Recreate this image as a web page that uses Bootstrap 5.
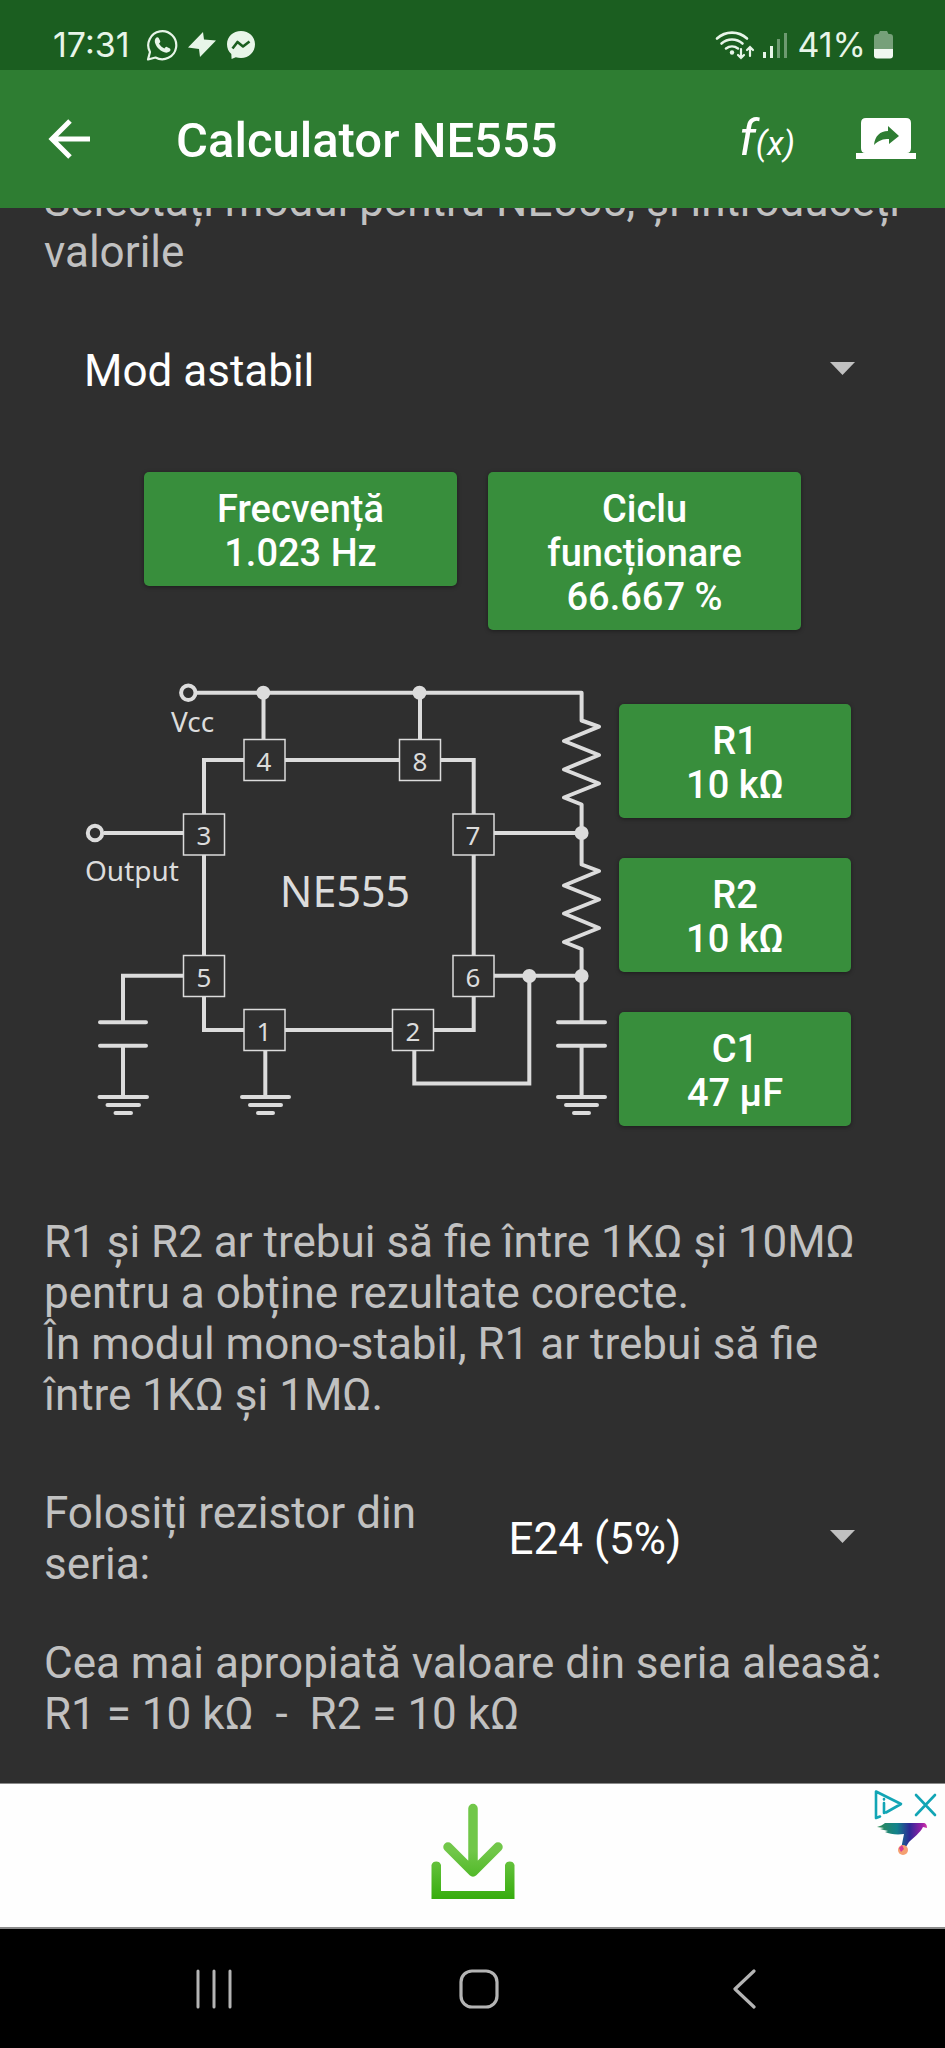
<!DOCTYPE html>
<html lang="ro">
<head>
<meta charset="utf-8">
<meta name="viewport" content="width=device-width, initial-scale=1">
<title>Calculator NE555</title>
<link href="https://cdn.jsdelivr.net/npm/bootstrap@5.3.0/dist/css/bootstrap.min.css" rel="stylesheet">
<style>
  body { background: #2f2f2f; color: #c1c1c1; font-family: Roboto, "Noto Sans", sans-serif; font-size: 44px; line-height: 51px; }
  svg { display: block; flex: none; }
  .status-strip { background: #1b5e20; color: #e8f5e9; height: 70px; padding: 20px 52px 0 53px; font-size: 34px; line-height: 50px; font-family: Inter, Roboto, sans-serif; font-weight: 400; }
  .app-header { background: #2e7d32; height: 138px; padding: 0 29px 0 48px; }
  .app-header h1 { font-size: 49px; line-height: 56px; font-weight: 500; margin-left: 84px; padding-top: 4px; }
  .icon-btn { background: none; border: 0; padding: 0; color: #fff; }
  .fx-f { font-size: 50px; line-height: 56px; font-style: italic; }
  .fx-x { font-size: 34px; font-style: italic; }
  .share-btn { margin-left: 61px; }
  .page-body { padding: 0 44px 43px; }
  .intro-text { margin-top: -32px; }
  .spinner-select { appearance: none; border: 0; background-color: transparent; color: #fff; width: 100%; height: 98px; padding: 0 80px 0 36px; font: inherit; }
  .select-box { display: grid; align-items: center; }
  .select-box > * { grid-area: 1 / 1; }
  .select-box > svg { justify-self: end; margin-right: 46px; pointer-events: none; }
  .mode-box { margin: 44px 0 52px; }
  .mode-box .spinner-select { padding-left: 40px; }
  .value-btn { background: #388e3c; color: #fff; font-size: 38px; line-height: 44px; font-weight: 500; border: 0; border-radius: 5px; padding: 15px 30px 11px; box-shadow: 0 1px 4px #0006; }
  .value-btn:hover { background: #43a047; color: #fff; }
  .result-row { gap: 31px; }
  .result-row .value-btn { width: 313px; }
  .circuit-row { margin: 50px 14px 67px 0; }
  .part-col { gap: 40px; width: 232px; }
  .series-row { margin: 67px 0 48px; }
  .ad-strip { background: #fefefe; height: 146px; border-top: 1px solid #8a8a8a; border-bottom: 2px solid #8a8a8a; padding-bottom: 10px; }
  .ad-marks { top: 4px; right: 8px; }
  .nav-keys { background: #000; height: 119px; padding: 0 69px 0 81px; }
</style>
</head>
<body>
<div class="min-vh-100 d-flex flex-column">
  <div class="status-strip d-flex align-items-center">
    <span>17:31</span>
    <svg class="ms-3" width="32" height="32" viewBox="0 0 32 32" fill="none" stroke="#e8f5e9">
      <path d="M2 30.500 4 23A14 14 0 1 1 9.500 28.500Z" stroke-width="2.200" stroke-linejoin="round"/>
      <path fill="#e8f5e9" stroke="none" d="M9.500 9.500c1-1.500 2.500-1.800 3.200-.6l1.500 3c.3.900-.3 1.600-1.200 2.600 1.200 2.300 3 4 5.400 5 1-1.200 1.600-2 2.500-1.600l3 1.500c1 .7.600 2.300-.4 3.200-3 2.400-7.500.4-10.500-2.500s-5.500-7.500-3.500-10.600z"/>
    </svg>
    <svg class="ms-2" width="32" height="28" viewBox="0 0 32 28" fill="#e8f5e9"><path d="M17 1 2 16.500 13 18l1 8L30 9.500 18 8.500z"/></svg>
    <svg class="ms-2" width="30" height="30" viewBox="0 0 30 30"><path fill="#e8f5e9" d="M15 1C7 1 1 6.800 1 14.300c0 4 1.500 7.300 4.300 9.800l.3 4.900 4.200-1.800c1.600.5 3.400.8 5.200.8 8 0 14-6 14-13.700S23 1 15 1z"/><path fill="none" stroke="#1b5e20" stroke-width="2.600" stroke-linejoin="round" d="m6.500 18.500 5-6.500 5.500 4.500 6.500-5"/></svg>
    <svg class="ms-auto" width="40" height="30" viewBox="0 0 40 30" fill="none" stroke="#e8f5e9" stroke-width="2.600" stroke-linecap="round">
      <path d="M2 8.500a22 22 0 0 1 30 0M6.500 13.500a16 16 0 0 1 21 0M11 18.500a10 10 0 0 1 12 0"/><circle cx="17" cy="22.500" r="2.200" fill="#e8f5e9" stroke="none"/>
      <path d="M26 19v9m-3-3 3 3 3-3M35 26v-9m-3 3 3-3 3 3" stroke-width="2.200"/>
    </svg>
    <svg class="ms-2" width="26" height="27" viewBox="0 0 26 27" fill="#e8f5e9"><path d="M0 20h3v6H0zM7 14h3v12H7z"/><path opacity=".4" d="M14 7h3v19h-3zM21 1h3v25h-3z"/></svg>
    <span class="ms-2">41%</span>
    <svg class="ms-2" width="19" height="28" viewBox="0 0 19 28"><path fill="#76a079" d="M6 0h7l1.500 3H16a3 3 0 0 1 3 3v13H0V6a3 3 0 0 1 3-3h1.500z"/><path fill="#f1f8f1" d="M0 18h19v6.500a3 3 0 0 1-3 3H3a3 3 0 0 1-3-3z"/></svg>
  </div>

  <header class="app-header d-flex align-items-center text-white">
    <button class="icon-btn" aria-label="Înapoi"><svg width="44" height="42" viewBox="0 0 44 42" fill="none" stroke="#fff" stroke-width="5"><path d="M22 3 4 21l18 18M4 21h38"/></svg></button>
    <h1 class="mb-0">Calculator NE555</h1>
    <button class="icon-btn ms-auto" aria-label="Formule"><span class="fx-f">f</span><span class="fx-x">(x)</span></button>
    <button class="icon-btn share-btn" aria-label="Distribuie"><svg width="60" height="42" viewBox="0 0 60 42"><path fill="#fff" d="M10 0h40q5 0 5 5v25q0 5-4 5h9v6H0v-6h9q-4 0-4-5V5q0-5 5-5z"/><path fill="#2e7d32" d="M18 27c1-9 6-14 14-14V8l11 10-10 8v-5c-6 0-10 1-15 6z"/></svg></button>
  </header>

  <main class="page-body flex-grow-1 overflow-hidden">
    <p class="intro-text mb-0">Selectați modul pentru NE555, și introduceți valorile</p>

    <div class="select-box mode-box">
      <select class="spinner-select" aria-label="Mod de funcționare"><option>Mod astabil</option><option>Mod mono-stabil</option></select>
      <svg width="25" height="18" viewBox="0 0 25 18"><path fill="#c1c1c1" d="M0 0h25L12.500 13z"/></svg>
    </div>

    <div class="result-row d-flex justify-content-center align-items-start">
      <button class="value-btn btn">Frecvență<br>1.023 Hz</button>
      <button class="value-btn btn">Ciclu funcționare 66.667 %</button>
    </div>

    <div class="circuit-row d-flex justify-content-center align-items-center">
      <svg width="539" height="470" viewBox="80 680 539 470" role="img" aria-label="Schema NE555" font-family="Noto Sans, sans-serif" fill="#dcdcdc">
        <g fill="none" stroke="#dcdcdc" stroke-width="4">
          <circle cx="188.300" cy="692.700" r="7.200"/><circle cx="95" cy="833" r="7.200"/>
          <path d="M197 692.700H581.600V720.500L599 726.700 564 741 599 755 564 769.500 599 783.500 564 797.500 581.600 804.500V864.500L599 871 564 885.500 599 899.500 564 913.500 599 928 564 942 581.600 949V1022M263.500 693V739M420 693V739" stroke-linejoin="round"/>
          <path d="M204 760H473.700V1030H204ZM104 833H184M494 833H581M494 975.700H581M184 975.700H123V1022M123 1046V1097M265.300 1050V1097M581.600 1046V1097M414.300 1050V1083.500H529.300V976"/>
          <path stroke-linecap="round" d="M100 1022.300H146M100 1045.700H146M558 1022.300H605M558 1045.700H605M99.500 1097H147M107.500 1105H139M115.500 1113H131M242 1097H289M250 1105H281M258 1113H273M558 1097H605M566 1105H597M574 1113H589"/>
        </g>
        <circle cx="263.300" cy="692.700" r="7"/><circle cx="419.500" cy="692.700" r="7"/><circle cx="581.600" cy="833" r="7"/><circle cx="529.300" cy="976" r="7"/><circle cx="581.600" cy="976" r="7"/>
        <g fill="#2f2f2f" stroke="#dcdcdc" stroke-width="1.500">
          <rect x="244" y="739.500" width="41" height="41"/><rect x="399.500" y="739.500" width="41" height="41"/>
          <rect x="183.500" y="814" width="41" height="41"/><rect x="453" y="814" width="41" height="41"/>
          <rect x="183.500" y="955.500" width="41" height="41"/><rect x="453" y="955.500" width="41" height="41"/>
          <rect x="244" y="1009.500" width="41" height="41"/><rect x="392.500" y="1009.500" width="41" height="41"/>
        </g>
        <g font-size="26" text-anchor="middle">
          <text x="264" y="771">4</text><text x="420" y="771">8</text>
          <text x="204" y="845">3</text><text x="473" y="845">7</text>
          <text x="204" y="987">5</text><text x="473" y="987">6</text>
          <text x="264" y="1041">1</text><text x="413" y="1041">2</text>
        </g>
        <text x="171" y="732" font-size="28">Vcc</text>
        <text x="85" y="881" font-size="28">Output</text>
        <text x="345" y="907" font-size="43" text-anchor="middle">NE555</text>
      </svg>
      <div class="part-col d-flex flex-column">
        <button class="value-btn btn">R1<br>10 kΩ</button>
        <button class="value-btn btn">R2<br>10 kΩ</button>
        <button class="value-btn btn">C1<br>47 µF</button>
      </div>
    </div>

    <p class="mb-0">R1 și R2 ar trebui să fie între 1KΩ și 10MΩ pentru a obține rezultate corecte.<br>În modul mono-stabil, R1 ar trebui să fie între 1KΩ și 1MΩ.</p>

    <div class="series-row row g-0 align-items-center">
      <label class="col-6" for="series">Folosiți rezistor din seria:</label>
      <div class="col-6 select-box">
        <select class="spinner-select" id="series"><option>E24 (5%)</option><option>E12 (10%)</option></select>
        <svg width="25" height="18" viewBox="0 0 25 18"><path fill="#c1c1c1" d="M0 0h25L12.500 13z"/></svg>
      </div>
    </div>

    <p class="mb-0">Cea mai apropiată valoare din seria aleasă:<br>R1 = 10 kΩ&nbsp; -&nbsp; R2 = 10 kΩ</p>
  </main>

  <aside class="ad-strip position-relative d-flex justify-content-center align-items-center">
    <svg width="86" height="98" viewBox="0 0 86 98" fill="none" stroke-width="9.500" stroke-linecap="round" stroke-linejoin="round">
      <defs><linearGradient id="leaf" gradientUnits="userSpaceOnUse" x1="0" y1="0" x2="0" y2="98"><stop offset=".5" stop-color="#71c749"/><stop offset="1" stop-color="#35ac0c"/></linearGradient></defs>
      <g stroke="url(#leaf)"><path d="M43 6.500V66M18 45 43 70 68 45"/><path fill="url(#leaf)" d="M36 64h14l-7 6z" stroke-width="3"/></g>
      <path fill="url(#leaf)" d="M1.500 97V63a5 5 0 0 1 9.500 0V89H75V63a5 5 0 0 1 9.500 0V97z"/>
    </svg>
    <div class="ad-marks position-absolute">
      <svg width="64" height="68" viewBox="0 0 64 68" fill="none">
        <defs><linearGradient id="bird" x1="0" x2="1" y1="0" y2="0"><stop offset="0" stop-color="#2f8a54"/><stop offset=".4" stop-color="#12828c"/><stop offset=".65" stop-color="#2d2a96"/><stop offset=".9" stop-color="#9a1ea8"/><stop offset="1" stop-color="#d33aa6"/></linearGradient></defs>
        <g stroke="#12a5b5" stroke-width="2.600" stroke-linecap="round" stroke-linejoin="round"><path d="M7 28.500 3 30V3.500L28 16 13 24.500M11 15v10M11 11v.5M43 7 62 27M62 7 43 27"/></g>
        <path fill="url(#bird)" d="M12 35h38c3 0 4 2 4 5l-4-1c-3 6-9 10-14 15l-5 8-3-1 3-15c-8 1-14 0-19-2l3-1-8-2 4-1-7-1c3-1 6-2 8-4z"/>
        <circle cx="30" cy="62" r="5" fill="#f5a071"/><path fill="#d83a94" d="m26 60 3-3 2 4-3 3z"/>
      </svg>
    </div>
  </aside>

  <nav class="nav-keys d-flex align-items-center" aria-label="Navigare">
    <button class="icon-btn flex-fill d-flex justify-content-center" aria-label="Recente"><svg width="40" height="40" viewBox="0 0 40 40" stroke="#b4b4b4" stroke-width="3" stroke-linecap="round"><path d="M4 2v36M20 2v36M36 2v36"/></svg></button>
    <button class="icon-btn flex-fill d-flex justify-content-center" aria-label="Acasă"><svg width="40" height="40" viewBox="0 0 40 40" fill="none" stroke="#b4b4b4" stroke-width="3.200"><rect x="2" y="2" width="36" height="36" rx="11"/></svg></button>
    <button class="icon-btn flex-fill d-flex justify-content-center" aria-label="Înapoi"><svg width="40" height="40" viewBox="0 0 40 40" fill="none" stroke="#b4b4b4" stroke-width="3.200" stroke-linecap="round" stroke-linejoin="round"><path d="M30 2 11 20l19 18"/></svg></button>
  </nav>
</div>
<script src="https://cdn.jsdelivr.net/npm/bootstrap@5.3.0/dist/js/bootstrap.bundle.min.js"></script>
</body>
</html>
